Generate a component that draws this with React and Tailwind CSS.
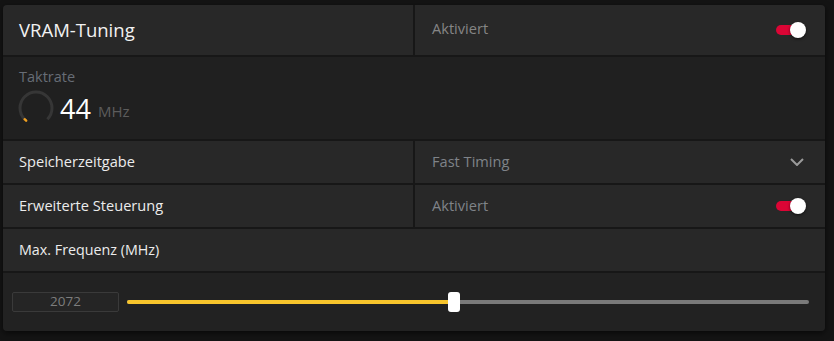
import React from "react";

const font = { fontFamily: "'Open Sans', 'Noto Sans', sans-serif" };

function Toggle() {
  return (
    <div className="relative w-[30px] h-[16px] flex items-center">
      <div className="w-[26px] h-[10px] rounded-full bg-[#dc0535]" />
      <div className="absolute right-0 top-0 w-[16px] h-[16px] rounded-full bg-white shadow-[0_1px_3px_rgba(0,0,0,0.6)]" />
    </div>
  );
}

function Dial() {
  const cx = 18, cy = 18, r = 16;
  const a1 = (135 * Math.PI) / 180;
  const a2 = (45 * Math.PI) / 180;
  const x1 = cx + r * Math.cos(a1), y1 = cy + r * Math.sin(a1);
  const x2 = cx + r * Math.cos(a2), y2 = cy + r * Math.sin(a2);
  const t = (128 * Math.PI) / 180;
  const xt = cx + r * Math.cos(t), yt = cy + r * Math.sin(t);
  return (
    <svg width="36" height="36" viewBox="0 0 36 36" className="overflow-visible">
      <path d={`M ${x1} ${y1} A ${r} ${r} 0 1 1 ${x2} ${y2}`} fill="none" stroke="#363636" strokeWidth="3" />
      <path d={`M ${x1} ${y1} A ${r} ${r} 0 0 1 ${xt} ${yt}`} fill="none" stroke="#f0a020" strokeWidth="2.5" strokeLinecap="round" />
    </svg>
  );
}

export default function App() {
  return (
    <div className="w-[834px] h-[341px] bg-[#141414] pt-[5px] pl-[3px]" style={font}>
      <div className="w-[822px] h-[326px] rounded-[4px] overflow-hidden bg-[#171717] flex flex-col gap-[2px] shadow-[0_2px_6px_rgba(0,0,0,0.6)]">
        {/* header */}
        <div className="grid grid-cols-[410px_410px] gap-[2px] h-[50px] shrink-0">
          <div className="bg-[#282828] flex items-center pl-4 pb-[1px] text-[18.5px] text-[#f2f2f2]">VRAM-Tuning</div>
          <div className="bg-[#282828] flex items-center justify-between pl-[17px] pr-[19px]">
            <span className="text-[14.6px] text-[#858585] pb-[2px]">Aktiviert</span>
            <Toggle />
          </div>
        </div>
        {/* Taktrate */}
        <div className="bg-[#202020] h-[82px] shrink-0 pl-4 pt-[10px] flex flex-col">
          <span className="text-[14.5px] text-[#676d76] leading-[20px]">Taktrate</span>
          <div className="flex items-center mt-[3px] -ml-[1px]">
            <Dial />
            <span className="ml-[6px] text-[27px] text-white leading-none">44</span>
            <span className="ml-[7px] mt-[6px] text-[15px] text-[#5c5c5c] leading-none">MHz</span>
          </div>
        </div>
        {/* Speicherzeitgabe */}
        <div className="grid grid-cols-[410px_410px] gap-[2px] h-[42px] shrink-0">
          <div className="bg-[#282828] flex items-center pl-4 pb-[1px] text-[14.6px] text-[#ececec]">Speicherzeitgabe</div>
          <div className="bg-[#282828] flex items-center justify-between pl-[17px] pr-[21px]">
            <span className="text-[14.6px] text-[#7f8388] pb-[1px]">Fast Timing</span>
            <svg width="14" height="8" viewBox="0 0 14 8">
              <path d="M1 1 L7 7 L13 1" fill="none" stroke="#9a9a9a" strokeWidth="2" />
            </svg>
          </div>
        </div>
        {/* Erweiterte */}
        <div className="grid grid-cols-[410px_410px] gap-[2px] h-[42px] shrink-0">
          <div className="bg-[#282828] flex items-center pl-4 pb-[1px] text-[14.6px] text-[#ececec]">Erweiterte Steuerung</div>
          <div className="bg-[#282828] flex items-center justify-between pl-[17px] pr-[19px]">
            <span className="text-[14.6px] text-[#7f8388] pb-[1px]">Aktiviert</span>
            <Toggle />
          </div>
        </div>
        {/* Max Frequenz */}
        <div className="bg-[#282828] h-[42px] shrink-0 flex items-center pl-4 pb-[1px] text-[14.3px] text-[#ececec]">
          Max. Frequenz (MHz)
        </div>
        {/* Slider */}
        <div className="bg-[#222222] flex-1 flex items-center pl-[9px] pr-4 pb-[1px]">
          <div className="w-[107px] h-[20px] border border-[#3a3a3a] bg-[#252525] rounded-[2px] flex items-center justify-center text-[13.5px] text-[#7d7d7d]">
            2072
          </div>
          <div className="relative flex-1 ml-2 h-[20px] flex items-center">
            <div className="w-full h-[4px] rounded-full bg-[#7a7a7a] flex">
              <div className="h-full rounded-full bg-[#f8c52c]" style={{ width: "48%" }} />
            </div>
            <div className="absolute top-0 w-[12px] h-[20px] rounded-[3px] bg-white" style={{ left: "calc(48% - 6px)" }} />
          </div>
        </div>
      </div>
    </div>
  );
}
